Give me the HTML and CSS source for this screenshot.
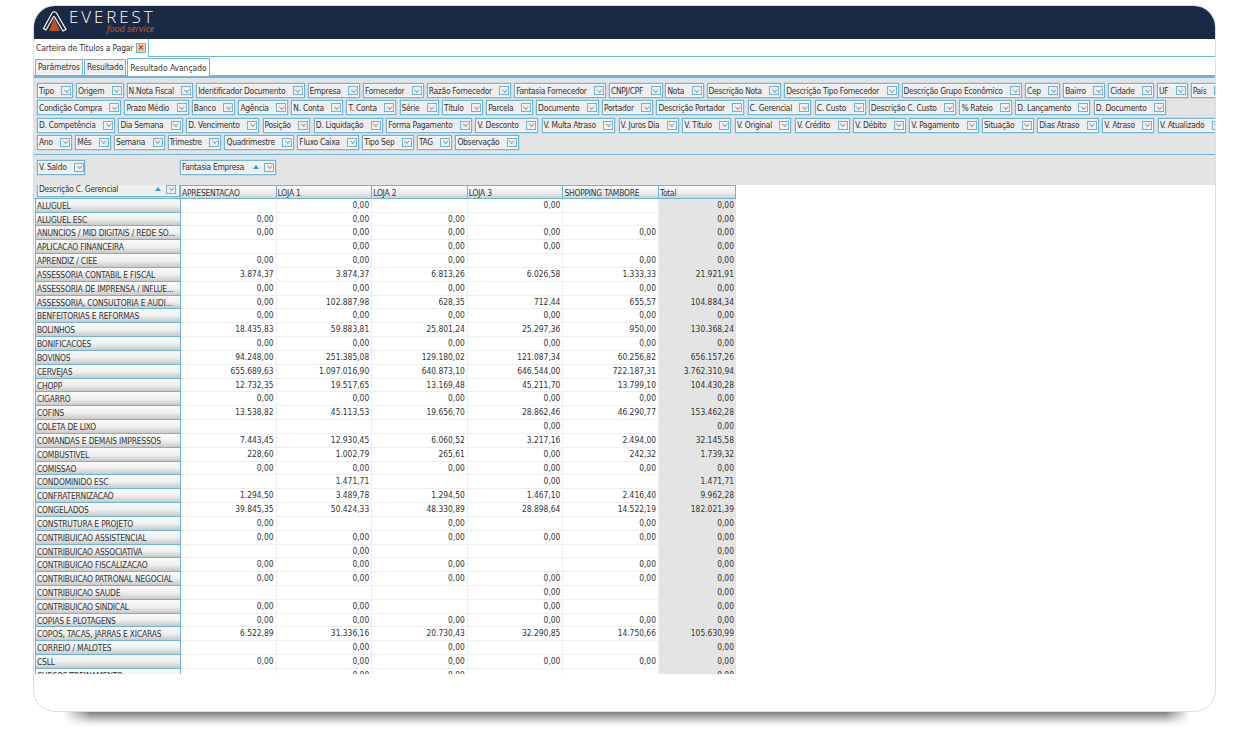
FILE: index.html
```html
<!DOCTYPE html>
<html lang="pt-BR">
  <head>
    <meta charset="UTF-8" />
    <title>Carteira de Titulos a Pagar</title>
    <link rel="stylesheet" href="styles.css">
  </head>

  <body>
    <div class="frame">
    <div class="card">
      <div class="top-bar">
        <svg class="logo-icon" viewBox="0 0 26 24" width="26" height="24">
          <path class="logo-peak" d="M7 21 L12 8 L18 21 Z" />
          <path class="logo-line" d="M1.5 18.5 L10 3 Q12 0.5 14.5 3 L24 19.5 L21 21 L12.6 7 Q12 6.2 11.4 7 L4 20 Z" />
        </svg>
        <div class="logo-text">
          <div class="logo-name">EVEREST</div>
          <div class="logo-sub">food service</div>
        </div>
      </div>

      <div class="main-tabs">
        <div class="main-tab">Carteira de Titulos a Pagar <span class="tab-close"></span></div>
      </div>

      <div class="sub-tabs">
        <div class="sub-tab">Parâmetros</div>
        <div class="sub-tab">Resultado</div>
        <div class="sub-tab active">Resultado Avançado</div>
      </div>

      <div class="fields">
        <div class="chip-row">
          <div class="chip">Tipo<b></b></div>
          <div class="chip">Origem<b></b></div>
          <div class="chip">N.Nota Fiscal<b></b></div>
          <div class="chip">Identificador Documento<b></b></div>
          <div class="chip">Empresa<b></b></div>
          <div class="chip">Fornecedor<b></b></div>
          <div class="chip">Razão Fornecedor<b></b></div>
          <div class="chip">Fantasia Fornecedor<b></b></div>
          <div class="chip">CNPJ/CPF<b></b></div>
          <div class="chip">Nota<b></b></div>
          <div class="chip">Descrição Nota<b></b></div>
          <div class="chip">Descrição Tipo Fornecedor<b></b></div>
          <div class="chip">Descrição Grupo Econômico<b></b></div>
          <div class="chip">Cep<b></b></div>
          <div class="chip">Bairro<b></b></div>
          <div class="chip">Cidade<b></b></div>
          <div class="chip">UF<b></b></div>
          <div class="chip">País<b></b></div>
        </div>
        <div class="chip-row">
          <div class="chip">Condição Compra<b></b></div>
          <div class="chip">Prazo Médio<b></b></div>
          <div class="chip">Banco<b></b></div>
          <div class="chip">Agência<b></b></div>
          <div class="chip">N. Conta<b></b></div>
          <div class="chip">T. Conta<b></b></div>
          <div class="chip">Série<b></b></div>
          <div class="chip">Título<b></b></div>
          <div class="chip">Parcela<b></b></div>
          <div class="chip">Documento<b></b></div>
          <div class="chip">Portador<b></b></div>
          <div class="chip">Descrição Portador<b></b></div>
          <div class="chip">C. Gerencial<b></b></div>
          <div class="chip">C. Custo<b></b></div>
          <div class="chip">Descrição C. Custo<b></b></div>
          <div class="chip">% Rateio<b></b></div>
          <div class="chip">D. Lançamento<b></b></div>
          <div class="chip">D. Documento<b></b></div>
        </div>
        <div class="chip-row">
          <div class="chip">D. Competência<b></b></div>
          <div class="chip">Dia Semana<b></b></div>
          <div class="chip">D. Vencimento<b></b></div>
          <div class="chip">Posição<b></b></div>
          <div class="chip">D. Liquidação<b></b></div>
          <div class="chip">Forma Pagamento<b></b></div>
          <div class="chip">V. Desconto<b></b></div>
          <div class="chip">V. Multa Atraso<b></b></div>
          <div class="chip">V. Juros Dia<b></b></div>
          <div class="chip">V. Título<b></b></div>
          <div class="chip">V. Original<b></b></div>
          <div class="chip">V. Crédito<b></b></div>
          <div class="chip">V. Débito<b></b></div>
          <div class="chip">V. Pagamento<b></b></div>
          <div class="chip">Situação<b></b></div>
          <div class="chip">Dias Atraso<b></b></div>
          <div class="chip">V. Atraso<b></b></div>
          <div class="chip">V. Atualizado<b></b></div>
        </div>
        <div class="chip-row">
          <div class="chip">Ano<b></b></div>
          <div class="chip">Mês<b></b></div>
          <div class="chip">Semana<b></b></div>
          <div class="chip">Trimestre<b></b></div>
          <div class="chip">Quadrimestre<b></b></div>
          <div class="chip">Fluxo Caixa<b></b></div>
          <div class="chip">Tipo Sep<b></b></div>
          <div class="chip">TAG<b></b></div>
          <div class="chip">Observação<b></b></div>
        </div>
      </div>

      <div class="pivot-top">
        <div class="chip saldo-chip">V. Saldo<b></b></div>
        <div class="chip sort-chip fantasia-chip">Fantasia Empresa<i></i><b></b></div>
      </div>

      <div class="pivot">
        <div class="row head-row">
          <div class="corner"><div class="chip sort-chip corner-chip">Descrição C. Gerencial<i></i><b></b></div></div>
          <span>APRESENTACAO</span><span>LOJA 1</span><span>LOJA 2</span><span>LOJA 3</span><span>SHOPPING TAMBORE</span><span>Total</span>
        </div>
        <div class="row"><div class="row-head">ALUGUEL</div><span></span><span>0,00</span><span></span><span>0,00</span><span></span><span>0,00</span></div>
        <div class="row"><div class="row-head">ALUGUEL ESC</div><span>0,00</span><span>0,00</span><span>0,00</span><span></span><span></span><span>0,00</span></div>
        <div class="row"><div class="row-head">ANUNCIOS / MID DIGITAIS / REDE SO...</div><span>0,00</span><span>0,00</span><span>0,00</span><span>0,00</span><span>0,00</span><span>0,00</span></div>
        <div class="row"><div class="row-head">APLICACAO FINANCEIRA</div><span></span><span>0,00</span><span>0,00</span><span>0,00</span><span></span><span>0,00</span></div>
        <div class="row"><div class="row-head">APRENDIZ / CIEE</div><span>0,00</span><span>0,00</span><span>0,00</span><span></span><span>0,00</span><span>0,00</span></div>
        <div class="row"><div class="row-head">ASSESSORIA CONTABIL E FISCAL</div><span>3.874,37</span><span>3.874,37</span><span>6.813,26</span><span>6.026,58</span><span>1.333,33</span><span>21.921,91</span></div>
        <div class="row"><div class="row-head">ASSESSORIA DE IMPRENSA / INFLUE...</div><span>0,00</span><span>0,00</span><span>0,00</span><span></span><span>0,00</span><span>0,00</span></div>
        <div class="row"><div class="row-head">ASSESSORIA, CONSULTORIA E AUDI...</div><span>0,00</span><span>102.887,98</span><span>628,35</span><span>712,44</span><span>655,57</span><span>104.884,34</span></div>
        <div class="row"><div class="row-head">BENFEITORIAS E REFORMAS</div><span>0,00</span><span>0,00</span><span>0,00</span><span>0,00</span><span>0,00</span><span>0,00</span></div>
        <div class="row"><div class="row-head">BOLINHOS</div><span>18.435,83</span><span>59.883,81</span><span>25.801,24</span><span>25.297,36</span><span>950,00</span><span>130.368,24</span></div>
        <div class="row"><div class="row-head">BONIFICACOES</div><span>0,00</span><span>0,00</span><span>0,00</span><span>0,00</span><span>0,00</span><span>0,00</span></div>
        <div class="row"><div class="row-head">BOVINOS</div><span>94.248,00</span><span>251.385,08</span><span>129.180,02</span><span>121.087,34</span><span>60.256,82</span><span>656.157,26</span></div>
        <div class="row"><div class="row-head">CERVEJAS</div><span>655.689,63</span><span>1.097.016,90</span><span>640.873,10</span><span>646.544,00</span><span>722.187,31</span><span>3.762.310,94</span></div>
        <div class="row"><div class="row-head">CHOPP</div><span>12.732,35</span><span>19.517,65</span><span>13.169,48</span><span>45.211,70</span><span>13.799,10</span><span>104.430,28</span></div>
        <div class="row"><div class="row-head">CIGARRO</div><span>0,00</span><span>0,00</span><span>0,00</span><span>0,00</span><span>0,00</span><span>0,00</span></div>
        <div class="row"><div class="row-head">COFINS</div><span>13.538,82</span><span>45.113,53</span><span>19.656,70</span><span>28.862,46</span><span>46.290,77</span><span>153.462,28</span></div>
        <div class="row"><div class="row-head">COLETA DE LIXO</div><span></span><span></span><span></span><span>0,00</span><span></span><span>0,00</span></div>
        <div class="row"><div class="row-head">COMANDAS E DEMAIS IMPRESSOS</div><span>7.443,45</span><span>12.930,45</span><span>6.060,52</span><span>3.217,16</span><span>2.494,00</span><span>32.145,58</span></div>
        <div class="row"><div class="row-head">COMBUSTIVEL</div><span>228,60</span><span>1.002,79</span><span>265,61</span><span>0,00</span><span>242,32</span><span>1.739,32</span></div>
        <div class="row"><div class="row-head">COMISSAO</div><span>0,00</span><span>0,00</span><span>0,00</span><span>0,00</span><span>0,00</span><span>0,00</span></div>
        <div class="row"><div class="row-head">CONDOMINIDO ESC</div><span></span><span>1.471,71</span><span></span><span>0,00</span><span></span><span>1.471,71</span></div>
        <div class="row"><div class="row-head">CONFRATERNIZACAO</div><span>1.294,50</span><span>3.489,78</span><span>1.294,50</span><span>1.467,10</span><span>2.416,40</span><span>9.962,28</span></div>
        <div class="row"><div class="row-head">CONGELADOS</div><span>39.845,35</span><span>50.424,33</span><span>48.330,89</span><span>28.898,64</span><span>14.522,19</span><span>182.021,39</span></div>
        <div class="row"><div class="row-head">CONSTRUTURA E PROJETO</div><span>0,00</span><span></span><span>0,00</span><span></span><span>0,00</span><span>0,00</span></div>
        <div class="row"><div class="row-head">CONTRIBUICAO ASSISTENCIAL</div><span>0,00</span><span>0,00</span><span>0,00</span><span>0,00</span><span>0,00</span><span>0,00</span></div>
        <div class="row"><div class="row-head">CONTRIBUICAO ASSOCIATIVA</div><span></span><span>0,00</span><span></span><span></span><span></span><span>0,00</span></div>
        <div class="row"><div class="row-head">CONTRIBUICAO FISCALIZACAO</div><span>0,00</span><span>0,00</span><span>0,00</span><span></span><span>0,00</span><span>0,00</span></div>
        <div class="row"><div class="row-head">CONTRIBUICAO PATRONAL NEGOCIAL</div><span>0,00</span><span>0,00</span><span>0,00</span><span>0,00</span><span>0,00</span><span>0,00</span></div>
        <div class="row"><div class="row-head">CONTRIBUICAO SAUDE</div><span></span><span></span><span></span><span>0,00</span><span></span><span>0,00</span></div>
        <div class="row"><div class="row-head">CONTRIBUICAO SINDICAL</div><span>0,00</span><span>0,00</span><span></span><span>0,00</span><span></span><span>0,00</span></div>
        <div class="row"><div class="row-head">COPIAS E PLOTAGENS</div><span>0,00</span><span>0,00</span><span>0,00</span><span>0,00</span><span>0,00</span><span>0,00</span></div>
        <div class="row"><div class="row-head">COPOS, TACAS, JARRAS E XICARAS</div><span>6.522,89</span><span>31.336,16</span><span>20.730,43</span><span>32.290,85</span><span>14.750,66</span><span>105.630,99</span></div>
        <div class="row"><div class="row-head">CORREIO / MALOTES</div><span></span><span>0,00</span><span>0,00</span><span></span><span></span><span>0,00</span></div>
        <div class="row"><div class="row-head">CSLL</div><span>0,00</span><span>0,00</span><span>0,00</span><span>0,00</span><span>0,00</span><span>0,00</span></div>
        <div class="row"><div class="row-head">CURSOS/TREINAMENTO</div><span></span><span>0,00</span><span>0,00</span><span></span><span></span><span>0,00</span></div>
      </div>
    </div>
    </div>
    <div class="card-shadow"></div>
  </body>
</html>
```

FILE: styles.css
```css
body {
  box-sizing: border-box;
  height: 747px;
  margin: 0;
  padding-top: 5px;
  background-color: white;
  color: #333;
  font-family: "DejaVu Sans", Verdana, sans-serif;
  font-stretch: condensed;
  font-size: 8.4px;
}

.frame {
  width: 1183px;
  height: 707px;
  margin-left: 33px;
}

/* shadow strip under the card, white overlays fade the two ends */
.card-shadow {
  width: 1127px;
  height: 15px;
  margin-left: 63px;
  background:
    linear-gradient(to right, white, rgba(255, 255, 255, 0) 28px, rgba(255, 255, 255, 0) calc(100% - 24px), white),
    linear-gradient(#7d7d7d, #b4b4b4 35%, #e6e6e6 70%, white);
}

.card {
  box-sizing: border-box;
  height: 707px;
  background-color: white;
  border: 1px solid #ddd;
  border-radius: 22px;
  overflow: hidden;
}

/* logo bar */
.top-bar {
  display: flex;
  height: 33px;
  padding-left: 8px;
  background-color: #1b2a44;
}

.logo-icon {
  margin-top: 4px;
}

.logo-peak {
  fill: #c2521c;
}

.logo-line {
  fill: none;
  stroke: white;
  stroke-width: 1.2;
}

.logo-text {
  margin-left: 1px;
  width: 85px;
  font-family: "Open Sans", sans-serif;
  font-stretch: normal;
}

.logo-name {
  margin-top: 3px;
  color: white;
  font-size: 17px;
  line-height: 16px;
  font-weight: 300;
  letter-spacing: 2.9px;
  white-space: nowrap;
}

.logo-sub {
  color: #c8561e;
  font-size: 9px;
  line-height: 8px;
  font-style: italic;
  text-align: right;
}

/* tabs */
.main-tabs {
  display: flex;
  height: 18px;
  box-sizing: border-box;
  border-bottom: 1px solid #6db3da;
}

.main-tab {
  display: flex;
  align-items: center;
  gap: 3px;
  width: 115px;
  height: 18px;
  padding-left: 2px;
  box-sizing: border-box;
  background-color: white;
  border-right: 1px solid #6db3da;
  letter-spacing: -0.1px;
  white-space: nowrap;
}

.tab-close {
  position: relative;
  flex: none;
  width: 10px;
  height: 10px;
  box-sizing: border-box;
  background-color: #eecfa8;
  border: 1px solid #6db3da;
}

.tab-close::before,
.tab-close::after {
  content: "";
  position: absolute;
  left: 1px;
  top: 3px;
  width: 6px;
  height: 1.4px;
  background-color: #b03a1c;
  transform: rotate(45deg);
}

.tab-close::after {
  transform: rotate(-45deg);
}

.sub-tabs {
  display: flex;
  gap: 1px;
  height: 19px;
  padding-left: 1px;
  box-sizing: border-box;
  align-items: flex-end;
  border-bottom: 1px solid #6db3da;
}

.sub-tab {
  height: 15px;
  line-height: 15px;
  padding: 0 2px;
  background-color: #f0f0f0;
  border: 1px solid #6db3da;
  border-bottom: none;
  letter-spacing: -0.1px;
}

.sub-tab.active {
  height: 17px;
  line-height: 18px;
  margin-bottom: -1px;
  background-color: white;
  letter-spacing: 0;
}

/* field chips */
.fields {
  display: flex;
  flex-direction: column;
  gap: 2.33px;
  padding: 7px 0 4px 3px;
  background-color: #e4e4e4;
  border-bottom: 1px solid #6db3da;
  box-shadow: inset 0 2px 0 #6db3da, inset 0 1px 0 #e4e4e4;
  overflow: hidden;
}

.chip-row {
  display: flex;
  gap: 3px;
}

.chip-row:nth-child(1) {
  gap: 2.85px;
}

.chip-row:nth-child(2) {
  gap: 3.2px;
}

.chip-row:nth-child(3) {
  gap: 3.4px;
}

.chip {
  display: flex;
  flex: none;
  align-items: center;
  height: 15px;
  padding-left: 1px;
  padding-right: 1px;
  box-sizing: border-box;
  background-color: #eee;
  border: 1px solid #6db3da;
  box-shadow: inset 0 0 0 1px #f8f8f8, 0 0 1px #6db3da;
  letter-spacing: -0.28px;
  white-space: nowrap;
}

.chip b {
  position: relative;
  flex: none;
  width: 10px;
  height: 9px;
  margin-left: 7.5px;
  box-sizing: border-box;
  background-color: #f0f0f0;
  border: 1px solid #6db3da;
}

.chip b::after {
  content: "";
  position: absolute;
  left: 2.5px;
  top: 0.5px;
  width: 2.5px;
  height: 2.5px;
  border-right: 1px solid #999;
  border-bottom: 1px solid #999;
  transform: rotate(45deg);
}

.sort-chip i {
  flex: none;
  width: 0;
  height: 0;
  margin-left: auto;
  border-left: 3px solid transparent;
  border-right: 3px solid transparent;
  border-bottom: 4px solid #3d9bd0;
}

/* pivot */
.pivot-top {
  display: flex;
  height: 30px;
  padding: 5px 0 0 3px;
  box-sizing: border-box;
  background-color: #e4e4e4;
}

.saldo-chip {
  width: 48px;
  justify-content: space-between;
}

.fantasia-chip {
  width: 96px;
  margin-left: 95px;
}

.fantasia-chip b,
.corner-chip b {
  margin-left: 5px;
}

.pivot {
  height: 489px;
  overflow: hidden;
}

.row {
  display: grid;
  grid-template-columns: 147px 95.6px 95.6px 95.6px 95.6px 95.6px 77px;
  height: 13.83px;
  line-height: 13px;
}

.row span {
  padding-right: 2px;
  text-align: right;
  border-right: 1px solid #eee;
  border-bottom: 1px solid #eee;
  overflow: hidden;
}

.row span:last-child {
  background-color: #e4e4e4;
  border-right: none;
  border-bottom: none;
}

.row-head {
  margin-left: 1px;
  padding-left: 1px;
  line-height: 14px;
  background: linear-gradient(#fafafa, #f0f0f0 50%, #c9c9c9);
  border: 1px solid #6db3da;
  border-top-width: 0;
  letter-spacing: -0.18px;
  white-space: nowrap;
  overflow: hidden;
}

.head-row span {
  padding: 0 0 0 1px;
  text-align: left;
  line-height: 14px;
  background: linear-gradient(#fafafa, #f0f0f0 50%, #d2d2d2);
  border: 1px solid #6db3da;
  border-left-width: 0;
  letter-spacing: -0.2px;
}

.head-row span:last-child {
  background: linear-gradient(#fafafa, #f0f0f0 50%, #d2d2d2);
  border: 1px solid #6db3da;
  border-left-width: 0;
}

.corner {
  background-color: #e4e4e4;
  border-bottom: 1px solid #6db3da;
  border-right: 1px solid #6db3da;
}

.corner-chip {
  width: 143px;
  margin: -3px 0 0 3px;
  padding-right: 3px;
}
```
